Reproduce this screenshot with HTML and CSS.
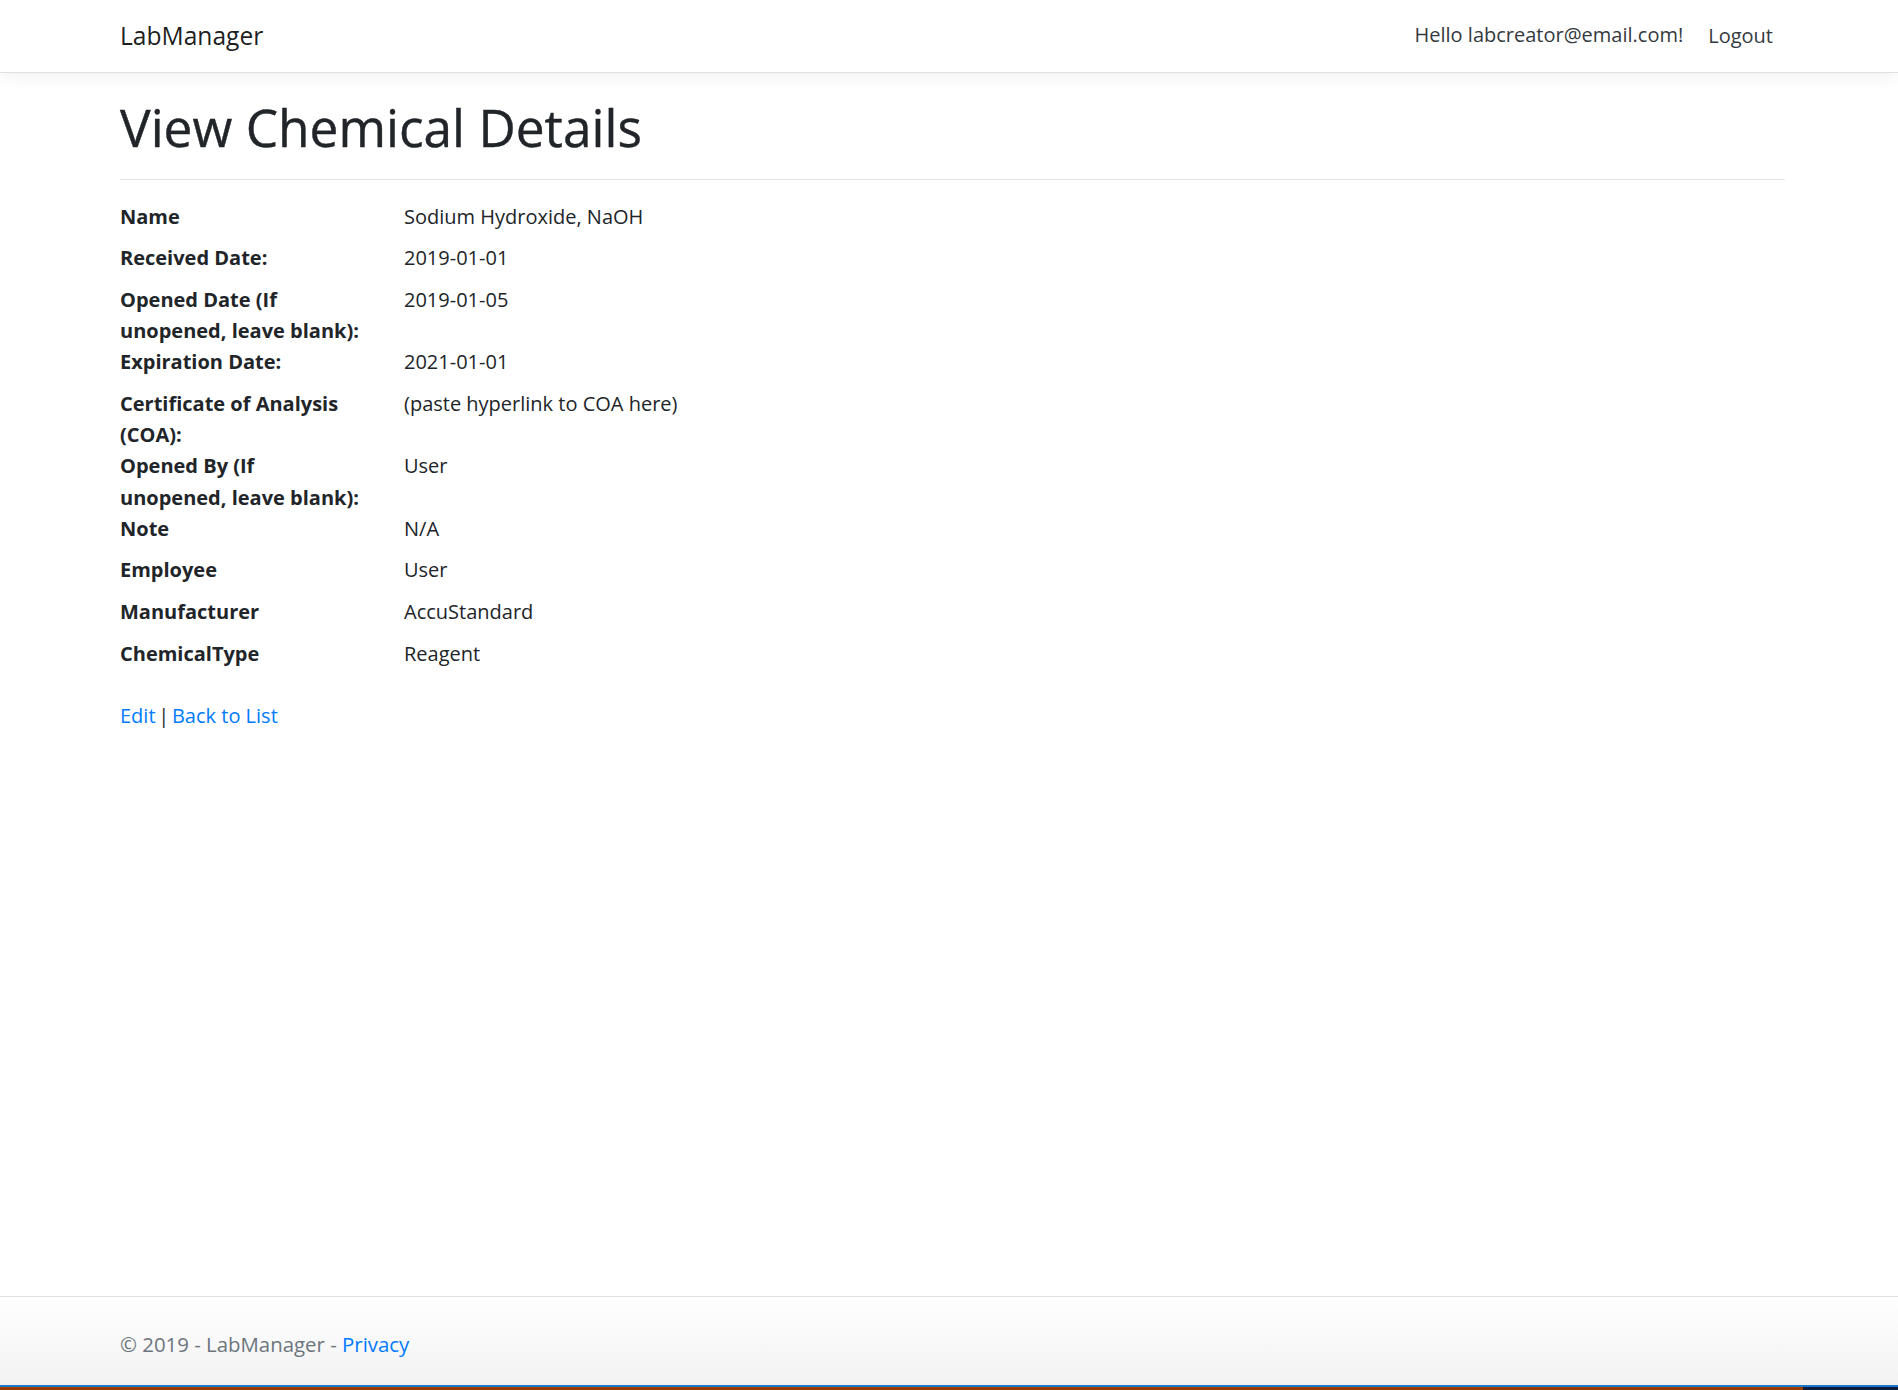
FILE: index.html
```html
<!DOCTYPE html>
<html lang="en">
<head>
<meta charset="utf-8">
<title>Details - LabManager</title>
<link rel="stylesheet" href="styles.css">
</head>
<body>
<header class="navbar">
  <div class="navbar-inner">
    <a class="brand" href="#">LabManager</a>
    <ul class="nav">
      <li><a class="nav-link nav-hello" href="#">Hello labcreator@email.com!</a></li>
      <li><button class="nav-link nav-logout" type="button">Logout</button></li>
    </ul>
  </div>
</header>

<main class="main">
  <div class="container">
    <h1 class="title">View Chemical Details</h1>
    <hr class="divider">
    <dl class="details">
      <dt>Name</dt>
      <dd>Sodium Hydroxide, NaOH</dd>
      <dt>Received Date:</dt>
      <dd>2019-01-01</dd>
      <dt>Opened Date (If<br>unopened, leave blank):</dt>
      <dd>2019-01-05</dd>
      <dt>Expiration Date:</dt>
      <dd>2021-01-01</dd>
      <dt>Certificate of Analysis (COA):</dt>
      <dd>(paste hyperlink to COA here)</dd>
      <dt>Opened By (If<br>unopened, leave blank):</dt>
      <dd>User</dd>
      <dt>Note</dt>
      <dd>N/A</dd>
      <dt>Employee</dt>
      <dd>User</dd>
      <dt>Manufacturer</dt>
      <dd>AccuStandard</dd>
      <dt>ChemicalType</dt>
      <dd>Reagent</dd>
    </dl>
    <div class="actions">
      <a href="#">Edit</a> <span class="sep">|</span> <a href="#">Back to List</a>
    </div>
  </div>
</main>

<footer class="footer">
  <div class="container footer-text">
    &copy; 2019 - LabManager - <a href="#">Privacy</a>
  </div>
</footer>

<div class="taskbar-edge">
  <div class="edge-brown"></div>
  <div class="edge-navy"></div>
</div>
</body>
</html>
```
FILE: styles.css
```css
html, body {
  margin: 0;
  padding: 0;
}

body {
  height: 100vh;
  display: flex;
  flex-direction: column;
  font-family: "Open Sans", "Noto Sans", sans-serif;
  font-size: 20px;
  line-height: 31.2px;
  color: #212529;
  background: #fff;
  overflow: hidden;
}

a {
  color: #007bff;
  text-decoration: none;
}

/* ---------- Navbar ---------- */
.navbar {
  flex: 0 0 auto;
  height: 72px;
  background: #fff;
  border-bottom: 1px solid #dee2e6;
  box-shadow: 0 5px 16px rgba(0, 0, 0, 0.05);
  position: relative;
  z-index: 1;
}

.navbar-inner {
  margin-left: 120px;
  width: 1668px;
  height: 100%;
  display: flex;
  align-items: center;
}

.brand {
  font-size: 24.6px;
  line-height: 39px;
  padding-bottom: 2px;
  color: rgba(0, 0, 0, 0.9);
  white-space: nowrap;
}

.nav {
  list-style: none;
  margin: 0 0 0 auto;
  padding: 0;
  display: flex;
  align-items: center;
}

.nav-link {
  display: block;
  font-family: inherit;
  font-size: 20px;
  line-height: 31.2px;
  color: #343a40;
  white-space: nowrap;
}

.nav-hello {
  padding: 0 10px 3px;
}

.nav-logout {
  background: none;
  border: 0;
  padding: 0 15px;
  margin: 0;
  cursor: pointer;
}

/* ---------- Main ---------- */
.main {
  flex: 1 1 auto;
}

.container {
  margin-left: 120px;
  width: 1665px;
}

.title {
  margin: 22.8px 0 0;
  font-size: 51.4px;
  line-height: 62.4px;
  font-weight: 500;
  color: #212529;
  -webkit-text-stroke: 0.4px #212529;
}

.divider {
  margin: 20.8px 0;
  border: 0;
  border-top: 1px solid rgba(0, 0, 0, 0.1);
  height: 0;
}

.details {
  margin: 0 0 20.8px;
  display: grid;
  grid-template-columns: 284px 1fr;
}

.details dt {
  margin: 0;
  padding-right: 39px;
  font-weight: 700;
}

.details dd {
  margin: 0 0 10.4px;
}

.actions {
  margin: 0;
}

.sep {
  margin: 0 -2.5px;
}

/* ---------- Footer ---------- */
.footer {
  flex: 0 0 auto;
  box-sizing: border-box;
  height: 89px;
  padding-top: 32px;
  border-top: 1px solid #dee2e6;
  background: linear-gradient(#ffffff, #f2f2f2);
  color: #6c757d;
  white-space: nowrap;
}

.footer-text {
  font-size: 20.4px;
}

/* ---------- Bottom edge of the window ---------- */
.taskbar-edge {
  flex: 0 0 auto;
  height: 3px;
  border-top: 2px solid #1b77c9;
  display: flex;
}

.edge-brown {
  flex: 1 1 auto;
  background: #993c02;
}

.edge-navy {
  flex: 0 0 95px;
  background: #0b1b3d;
}
```
